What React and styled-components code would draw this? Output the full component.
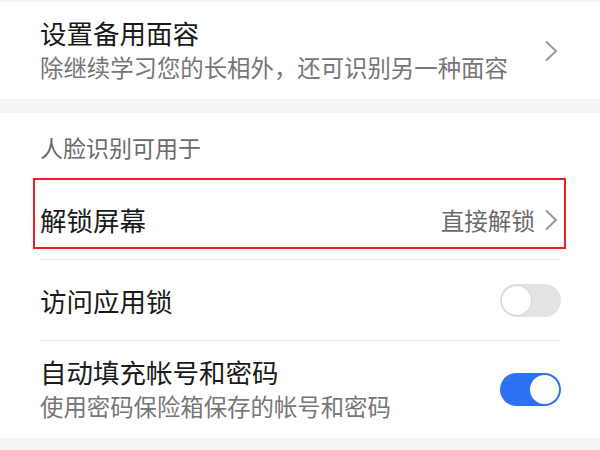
import React from "react";
import styled, { createGlobalStyle } from "styled-components";

const GlobalStyle = createGlobalStyle`
  body {
    margin: 0;
    background: #f4f4f4;
    font-family: "Noto Sans CJK SC", "Noto Sans", sans-serif;
  }
`;

const Chevron = () => (
  <ChevronIcon width="14" height="22" viewBox="0 0 14 22">
    <polyline points="2,1.5 12,11 2,20.5" fill="none" stroke="#9a9a9a" strokeWidth="2" />
  </ChevronIcon>
);

export default function App() {
  return (
    <Page>
      <GlobalStyle />
      <Card>
        <TallRow>
          <TextBlock>
            <Title>设置备用面容</Title>
            <Sub>除继续学习您的长相外，还可识别另一种面容</Sub>
          </TextBlock>
          <Chevron />
        </TallRow>
      </Card>
      <Card>
        <Header>人脸识别可用于</Header>
        <Row height={79}>
          <Title>解锁屏幕</Title>
          <Trailing>
            <Value>直接解锁</Value>
            <Chevron />
          </Trailing>
          <Highlight />
        </Row>
        <Divider />
        <Row height={80}>
          <Title>访问应用锁</Title>
          <Toggle on={false}>
            <Knob on={false} />
          </Toggle>
        </Row>
        <Divider />
        <TallRow>
          <TextBlock>
            <Title>自动填充帐号和密码</Title>
            <Sub>使用密码保险箱保存的帐号和密码</Sub>
          </TextBlock>
          <Toggle on>
            <Knob on />
          </Toggle>
        </TallRow>
      </Card>
    </Page>
  );
}

const Page = styled.div`
  width: 600px;
  height: 450px;
  padding-top: 2px;
  box-sizing: border-box;
  display: flex;
  flex-direction: column;
  gap: 14px;
  overflow: hidden;
`;

const Card = styled.div`
  background: #ffffff;
`;

const Row = styled.div`
  position: relative;
  height: ${(p) => p.height}px;
  padding: 0 39px 0 40px;
  display: flex;
  align-items: center;
  justify-content: space-between;
`;

const TallRow = styled(Row).attrs({ height: 97 })``;

const TextBlock = styled.div`
  display: flex;
  flex-direction: column;
  margin-top: -1px;
`;

const Title = styled.div`
  font-size: 26.5px;
  line-height: 35px;
  color: #1a1a1a;
`;

const Sub = styled.div`
  font-size: 23.4px;
  line-height: 35px;
  color: #767676;
`;

const Header = styled.div`
  height: 67px;
  padding-left: 40px;
  display: flex;
  align-items: center;
  font-size: 23px;
  color: #6a6a6a;
`;

const Trailing = styled.div`
  display: flex;
  align-items: center;
  gap: 9px;
`;

const Value = styled.span`
  font-size: 23.6px;
  color: #6a6a6a;
`;

const ChevronIcon = styled.svg`
  display: block;
  margin-right: 3px;
`;

const Divider = styled.div`
  height: 1px;
  margin: 0 40px;
  background: #e6e6e6;
`;

const Toggle = styled.div`
  width: 61px;
  height: 33px;
  border-radius: 17px;
  box-sizing: border-box;
  padding: 2px;
  display: flex;
  justify-content: ${(p) => (p.on ? "flex-end" : "flex-start")};
  background: ${(p) => (p.on ? "#2a72f2" : "#e3e3e3")};
`;

const Knob = styled.div`
  width: 29px;
  height: 29px;
  border-radius: 50%;
  background: #ffffff;
  box-shadow: ${(p) => (p.on ? "none" : "0 0 0 1px #d6d6d6")};
`;

const Highlight = styled.div`
  position: absolute;
  left: 33px;
  top: -2px;
  width: 533px;
  height: 71px;
  box-sizing: border-box;
  border: 2px solid #ee1c25;
  pointer-events: none;
`;
